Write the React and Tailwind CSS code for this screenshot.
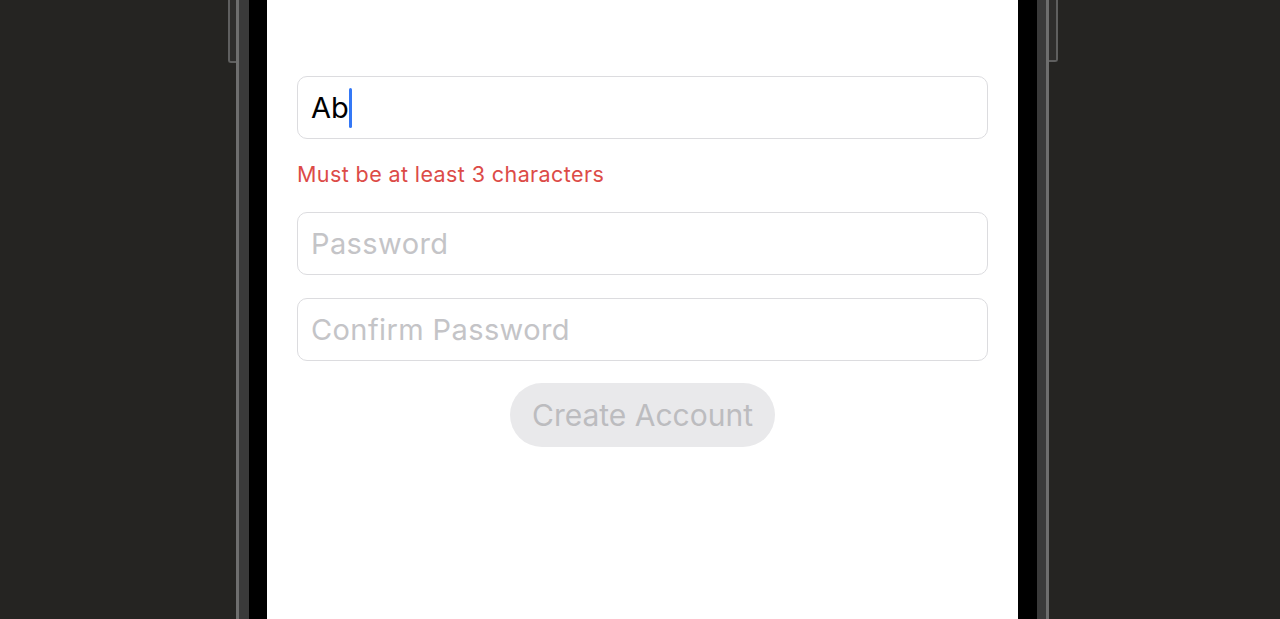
const Field = ({ placeholder }) => (
  <div className="h-[63px] rounded-[10px] border border-[#dcdcdf] bg-white flex items-center px-[13px]">
    <span className="text-[29px] text-[#c4c4c7] tracking-[0.4px]">{placeholder}</span>
  </div>
);

const App = () => {
  return (
    <div
      className="w-[1280px] h-[619px] overflow-hidden flex bg-[#252422]"
      style={{ fontFamily: 'Inter, "Noto Sans", sans-serif' }}
    >
      {/* left side + button */}
      <div className="w-[236px] flex justify-end">
        <div className="w-[8px] h-[63px] bg-[#2e2d2c] border-l-2 border-b-2 border-[#5f5f5f] rounded-bl-[3px]" />
      </div>
      {/* left frame */}
      <div className="w-[13px] flex">
        <div className="w-[3px] bg-[#6e6e6e]" />
        <div className="flex-1 bg-[#3a3a3a]" />
      </div>
      <div className="w-[18px] bg-black" />

      {/* Screen */}
      <div className="w-[751px] bg-white px-[30px] pt-[76px]">
        <div className="h-[63px] rounded-[10px] border border-[#dcdcdf] bg-white flex items-center px-[13px]">
          <span className="text-[29px] text-black leading-none">Ab</span>
          <span className="w-[3px] h-[40px] rounded-full bg-[#3478f6]" />
        </div>
        <p className="mt-[22px] text-[21.5px] leading-[26px] text-[#dc4b47] tracking-[0.4px]">
          Must be at least 3 characters
        </p>
        <div className="mt-[25px] flex flex-col gap-[23px]">
          <Field placeholder="Password" />
          <Field placeholder="Confirm Password" />
        </div>
        <div className="mt-[22px] flex justify-center">
          <div className="w-[265px] h-[64px] rounded-full bg-[#e9e9eb] flex items-center justify-center">
            <span className="text-[30px] text-[#bcbcbf]">Create Account</span>
          </div>
        </div>
      </div>

      <div className="w-[19px] bg-black" />
      {/* right frame */}
      <div className="w-[12px] flex">
        <div className="flex-1 bg-[#3a3a3a]" />
        <div className="w-[3px] bg-[#6e6e6e]" />
      </div>
      <div className="flex-1 flex">
        <div className="w-[9px] h-[62px] bg-[#2e2d2c] border-r-2 border-b-2 border-[#5f5f5f] rounded-br-[3px]" />
      </div>
    </div>
  );
};

export default App;
